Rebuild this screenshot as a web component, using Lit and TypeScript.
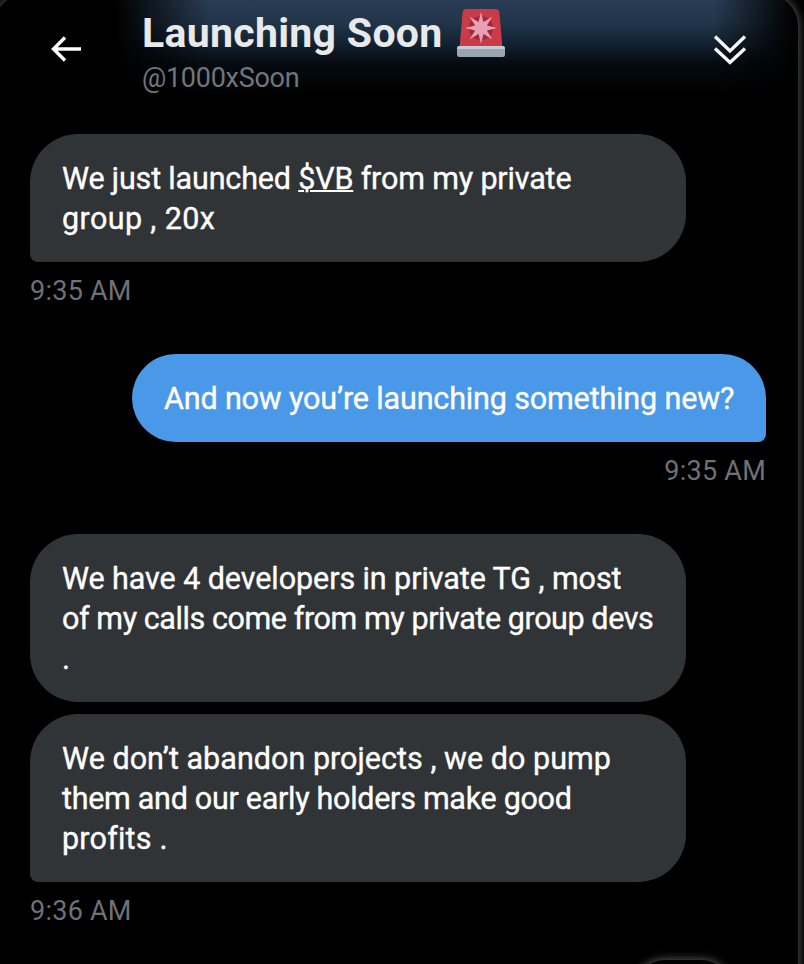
import { LitElement, html, css } from "lit";
import { customElement } from "lit/decorators.js";

interface Line { text: string; spacing: number; tag?: string; rest?: string }
interface Message { mine?: boolean; tail?: boolean; time?: string; lines: Line[] }

const MESSAGES: Message[] = [
  { tail: true, time: "9:35 AM", lines: [
    { text: "We just launched ", tag: "$VB", rest: " from my private", spacing: -0.17 },
    { text: "group , 20x", spacing: 0.38 },
  ] },
  { mine: true, tail: true, time: "9:35 AM", lines: [
    { text: "And now you’re launching something new?", spacing: -0.15 },
  ] },
  { lines: [
    { text: "We have 4 developers in private TG , most", spacing: -0.08 },
    { text: "of my calls come from my private group devs", spacing: -0.42 },
    { text: ".", spacing: 0 },
  ] },
  { tail: true, time: "9:36 AM", lines: [
    { text: "We don’t abandon projects , we do pump", spacing: 0.03 },
    { text: "them and our early holders make good", spacing: -0.29 },
    { text: "profits .", spacing: 0.2 },
  ] },
];

const STAR = Array.from({ length: 16 }, (_, i) => {
  const r = i % 2 ? 6.4 : 16;
  const a = (i * Math.PI) / 8;
  return `${(24 + r * Math.sin(a)).toFixed(2)},${(19 - r * Math.cos(a)).toFixed(2)}`;
}).join(" ");

@customElement("app-root")
export class AppRoot extends LitElement {
  static styles = css`
    :host { display: block; position: relative; height: 964px; overflow: hidden; background: #000;
      font-family: Roboto, "Noto Sans", sans-serif; color: #fff; }
    .panel { position: absolute; inset: -6px 6px -40px -6px; border-radius: 32px; background: #000; box-shadow: 0 0 8px 1px #555; overflow: hidden; }
    .glow { position: absolute; inset: 0 0 auto 0; height: 116px;
      background: linear-gradient(#2a3c54 6px, #22354a 28px, #152536 46px, #060c13 68px, #000 100px);
      mask-image: linear-gradient(90deg, transparent 120px, #000 215px, #000 720px, #0003 785px, transparent 804px); }
    .pill { position: absolute; left: 635px; top: 960px; width: 96px; height: 60px; border-radius: 40px; background: #000; box-shadow: 0 0 8px 1px #555; }
    .content { position: relative; }
    header { display: flex; height: 134px; box-sizing: border-box; padding: 8px 56px 0 50px; }
    .back { width: 34px; height: 34px; margin-top: 24px; }
    .names { margin-left: 58px; flex: 1; }
    .title { display: flex; align-items: center; height: 50px; gap: 14px; font-size: 41px; font-weight: 700; letter-spacing: 0.3px; color: #e7e9ea; white-space: nowrap; }
    .siren { width: 48px; height: 48px; }
    .handle { font-size: 27px; line-height: 40px; letter-spacing: -0.28px; color: #71767b; }
    .more { width: 36px; height: 36px; margin-top: 23px; }
    main { display: flex; flex-direction: column; padding: 0 38px 0 30px; align-items: flex-start; }
    .message { display: flex; flex-direction: column; margin-bottom: 12px; }
    .message.tail { margin-bottom: 44px; }
    .message.mine { align-self: flex-end; align-items: flex-end; }
    .bubble { box-sizing: border-box; width: 656px; padding: 25px 32px 23px; border-radius: 48px; background: #313437; font-size: 30.5px; line-height: 40px; -webkit-text-stroke: 0.35px #fff; }
    .tail .bubble { border-bottom-left-radius: 8px; }
    .mine .bubble { width: 634px; background: #4a99e9; border-radius: 44px 44px 8px 44px; }
    .line { white-space: pre; height: 40px; }
    .tag { text-decoration: underline; text-decoration-thickness: 2px; }
    time { font-size: 27px; line-height: 34px; letter-spacing: 0.25px; margin-top: 12px; height: 36px; color: #6e7175; }
  `;
  render() {
    return html`<div class="panel"><div class="glow"></div></div><div class="pill"></div>
    <div class="content"><header>
      <svg class="back" viewBox="0 0 34 34" fill="none" stroke="#fff" stroke-width="3.4"><path d="M31 17H4M15 5.500L3.500 17L15 28.500"/></svg>
      <div class="names"><div class="title"><span>Launching Soon</span>
        <svg class="siren" viewBox="0 0 48 48"><path d="M9.500 0H38.500Q42 0 42.400 3.500L45.500 39H2.500L5.600 3.500Q6 0 9.500 0Z" fill="#c93b47"/><circle cx="24" cy="19" r="12" fill="#a0283c"/><polygon points=${STAR} fill="#e9a0b4"/><rect y="37" width="48" height="11" rx="2.500" fill="#99a6b2"/><path d="M2.500 37H45.500Q48 37 48 40H0Q0 37 2.500 37Z" fill="#c3cdd6"/></svg>
      </div><div class="handle">@1000xSoon</div></div>
      <svg class="more" viewBox="0 0 36 36" fill="none" stroke="#f7f9f9" stroke-width="3.4"><path d="M3 5.500L18 20L33 5.500M3 17.500L18 31.500L33 17.500"/></svg>
    </header><main>
      ${MESSAGES.map(m => html`<div class="message ${m.mine ? "mine" : ""} ${m.tail ? "tail" : ""}"><div class="bubble">${m.lines.map(l => html`<div class="line" style="letter-spacing:${l.spacing}px">${l.text}${l.tag ? html`<span class="tag">${l.tag}</span>` : ""}${l.rest ?? ""}</div>`)}</div>${m.time ? html`<time>${m.time}</time>` : ""}</div>`)}
    </main></div>`;
  }
}
